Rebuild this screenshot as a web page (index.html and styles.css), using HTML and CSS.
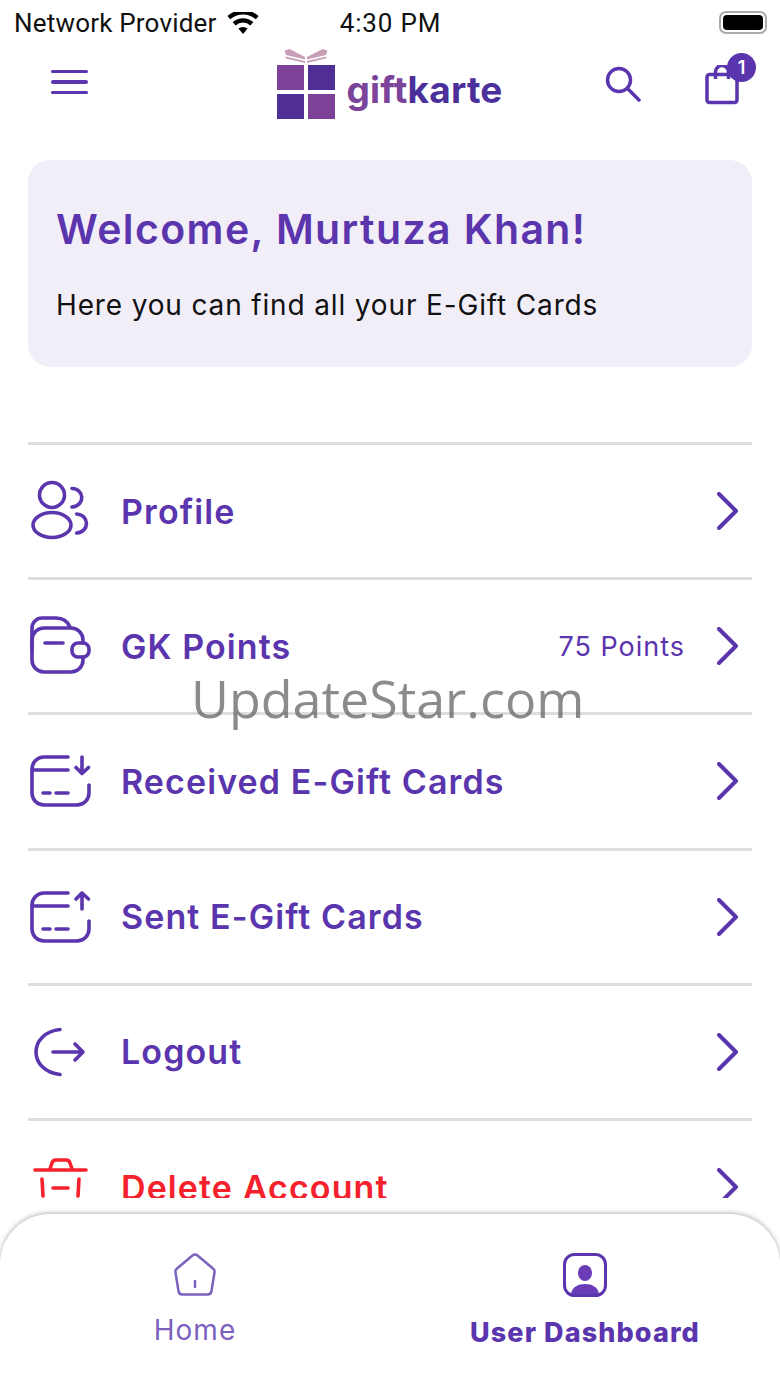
FILE: index.html
```html
<!DOCTYPE html>
<html lang="en">
<head>
  <meta charset="UTF-8">
  <meta name="viewport" content="width=device-width, initial-scale=1">
  <title>Giftkarte Dashboard</title>
  <link rel="stylesheet" href="styles.css">
</head>
<body>

<!-- Status bar -->
<div class="status-bar">
  <div class="status-left">
    <span>Network Provider</span>
    <svg class="wifi" viewBox="0 0 32 22"><path d="M16 22l-4.6-5.4a7 7 0 0 1 9.2 0z"/><path d="M8.6 13.4l-2.9-3.3a15.6 15.6 0 0 1 20.6 0l-2.9 3.3a11.2 11.2 0 0 0-14.8 0z"/><path d="M3.2 7.2L.4 4a23.6 23.6 0 0 1 31.2 0l-2.8 3.2a19.4 19.4 0 0 0-25.6 0z"/></svg>
  </div>
  <div class="status-time">4:30 PM</div>
  <div class="status-right">
    <div class="battery"><div class="battery-fill"></div></div>
  </div>
</div>

<!-- Header -->
<header>
  <div class="menu-btn"><span></span><span></span><span></span></div>
  <div class="logo">
    <svg class="logo-box" viewBox="0 0 58 71">
      <path class="ribbon" d="M7.500 1.500L12.500 0 28 8v2.500L9 6zM50.500 1.500L45.500 0 30 8v2.500L49 6z"/>
      <path class="ribbon" d="M8.500 7.500L28 12v2L9 9.500zM49.500 7.500L30 12v2l19-4.500z"/>
      <rect class="box-a" x="0" y="16" width="27" height="25"/>
      <rect class="box-b" x="31" y="16" width="27" height="25"/>
      <rect class="box-b" x="0" y="45" width="27" height="25"/>
      <rect class="box-a" x="31" y="45" width="27" height="25"/>
    </svg>
    <span class="logo-text"><span class="logo-gift">gift</span>karte</span>
  </div>
  <div class="header-right">
    <svg class="search" viewBox="0 0 36 36"><circle cx="14" cy="14" r="11.5"/><path d="M22.5 22.5L34 34"/></svg>
    <div class="cart">
      <svg class="bag" viewBox="0 0 34 40"><rect x="2" y="9.500" width="30" height="28" rx="2.500"/><path d="M10.500 14V7a6.500 6.500 0 0 1 13 0v7"/></svg>
      <span class="badge">1</span>
    </div>
  </div>
</header>

<main>
  <section class="welcome">
    <h1>Welcome, Murtuza Khan!</h1>
    <p>Here you can find all your E-Gift Cards</p>
  </section>

  <ul class="menu">
    <li>
      <svg class="icon" viewBox="0 0 64 64"><circle cx="24" cy="16" r="12.5"/><ellipse cx="24" cy="46" rx="19" ry="12.5"/><path d="M44 9.500c12 0 14 17 0 18.500"/><path d="M48.700 35c13 1 13 18 0 19"/></svg>
      <span class="label">Profile</span>
      <svg class="chevron" viewBox="0 0 22 38"><path d="M2 2l17 17L2 36"/></svg>
    </li>
    <li>
      <svg class="icon" viewBox="0 0 64 64"><path d="M4 36V14a10 10 0 0 1 10-10h14c6 0 11 2 14 9"/><path d="M55 29v-3a12 12 0 0 0-12-12H16A12 12 0 0 0 4 26v20a12 12 0 0 0 12 12h27a12 12 0 0 0 12-12v-3"/><rect x="44" y="29" width="17" height="14" rx="6"/><path d="M17 29h18"/></svg>
      <span class="label">GK Points</span>
      <span class="points">75 Points</span>
      <svg class="chevron" viewBox="0 0 22 38"><path d="M2 2l17 17L2 36"/></svg>
    </li>
    <li>
      <svg class="icon" viewBox="0 0 64 64"><path d="M40 8H16A12 12 0 0 0 4 20v24a12 12 0 0 0 12 12h33a12 12 0 0 0 12-12v-8"/><path d="M4 21h36"/><path d="M15 44h7M28 44h12"/><path d="M54 8v16M48 18.500l6 6 6.500-6"/></svg>
      <span class="label">Received E-Gift Cards</span>
      <svg class="chevron" viewBox="0 0 22 38"><path d="M2 2l17 17L2 36"/></svg>
    </li>
    <li>
      <svg class="icon" viewBox="0 0 64 64"><path d="M40 8H16A12 12 0 0 0 4 20v24a12 12 0 0 0 12 12h33a12 12 0 0 0 12-12v-8"/><path d="M4 21h36"/><path d="M15 44h7M28 44h12"/><path d="M54 8v16M48 14l6-6 6.500 6"/></svg>
      <span class="label">Sent E-Gift Cards</span>
      <svg class="chevron" viewBox="0 0 22 38"><path d="M2 2l17 17L2 36"/></svg>
    </li>
    <li>
      <svg class="icon" viewBox="0 0 64 64"><path d="M32 9.500C17 11 8 21 8 32s9 21 24 22.500"/><path d="M25 32h30M47 24l8 8-8 8"/></svg>
      <span class="label">Logout</span>
      <svg class="chevron" viewBox="0 0 22 38"><path d="M2 2l17 17L2 36"/></svg>
    </li>
    <li class="danger">
      <svg class="icon" viewBox="0 0 64 64"><path d="M7 15h51"/><path d="M22 14l2-6c.5-2 2-3 4-3h10c2 0 3.500 1 4 3l2 6"/><path d="M14 24l1 17M51 24l-1 17"/><path d="M25 33h15"/></svg>
      <span class="label">Delete Account</span>
      <svg class="chevron" viewBox="0 0 22 38"><path d="M2 2l17 17L2 36"/></svg>
    </li>
  </ul>
</main>

<!-- Bottom nav -->
<nav class="tabs">
  <div class="tab">
    <svg class="tab-icon home" viewBox="0 0 44 44"><path d="M19.500 2.500a4 4 0 0 1 5 0l15.500 13a4 4 0 0 1 1.500 4l-3 18.500a4 4 0 0 1-4 3.500H9.500a4 4 0 0 1-4-3.500l-3-18.500a4 4 0 0 1 1.500-4z"/><path d="M22 28v6"/></svg>
    <span>Home</span>
  </div>
  <div class="tab active">
    <svg class="tab-icon user" viewBox="0 0 44 44"><rect x="1.500" y="1.500" width="41" height="41" rx="10"/><ellipse class="fill" cx="22" cy="20" rx="7" ry="8"/><path class="fill" d="M8 41c1-7 7-10 14-10s13 3 14 10z"/></svg>
    <span>User Dashboard</span>
  </div>
</nav>

<div class="watermark">UpdateStar.com</div>

</body>
</html>
```

FILE: styles.css
```css
* { box-sizing: border-box; }
body { margin: 0; width: 780px; height: 1387px; overflow: hidden; position: relative; display: flex; flex-direction: column; background: #fff; font-family: Inter, "Liberation Sans", sans-serif; color: #5a35ad; }

.status-bar { height: 45px; flex: none; display: grid; grid-template-columns: 1fr auto 1fr; align-items: center; padding: 0 13px 0 14px; color: #111; font-size: 26px; font-family: Roboto, "Liberation Sans", sans-serif; }
.status-left { display: flex; align-items: center; gap: 10px; letter-spacing: .2px; }
.status-time { letter-spacing: .8px; }
.wifi { width: 32px; height: 22px; fill: #000; }
.status-right { display: flex; justify-content: flex-end; }
.battery { width: 48px; height: 23px; border: 2px solid #aaa; border-radius: 7px; padding: 2px; }
.battery-fill { height: 100%; background: #000; border-radius: 4px; }

header { height: 85px; flex: none; display: grid; grid-template-columns: 1fr auto 1fr; align-items: center; padding: 0 24px; }
.menu-btn { width: 37px; margin-left: 27px; display: flex; flex-direction: column; gap: 7px; margin-top: -11px; }
.menu-btn span { height: 3.500px; background: #5a35ad; border-radius: 2px; }
.logo { display: flex; align-items: flex-end; gap: 11px; margin-top: -7px; }
.logo-box { width: 58px; height: 71px; display: block; }
.ribbon { fill: #c7a0b8; }
.box-a { fill: #7d4298; }
.box-b { fill: #4f2f96; }
.logo-text { font-size: 37px; font-weight: 700; line-height: 44px; margin-bottom: 8px; color: #4b2f9b; letter-spacing: .2px; }
.logo-gift { color: #7b4399; }
.header-right { display: flex; justify-content: flex-end; align-items: center; gap: 64px; margin-top: -7px; }
.search { width: 36px; height: 36px; fill: none; stroke: #5a35ad; stroke-width: 3.5; stroke-linecap: round; }
.cart { position: relative; width: 51px; height: 44px; }
.bag { width: 34px; height: 40px; margin-top: 3px; display: block; fill: none; stroke: #5a35ad; stroke-width: 3.5; stroke-linejoin: round; }
.badge { position: absolute; right: 0; top: -9px; width: 29px; height: 29px; border-radius: 50%; background: #5a35ad; color: #fff; font-size: 18px; font-weight: 600; line-height: 29px; text-align: center; }

main { flex: 1; margin-bottom: 16px; padding: 30px 28px 0; overflow: hidden; }
.welcome { height: 207px; background: #f2eef8; border-radius: 22px; padding: 43px 28px 0; }
.welcome h1 { margin: 0; font-size: 41px; font-weight: 600; line-height: 52px; letter-spacing: 1.4px; }
.welcome p { margin: 32px 0 0; font-size: 28px; line-height: 36px; color: #111; letter-spacing: .85px; }

.menu { list-style: none; margin: 75px 0 0; padding: 0; }
.menu li { height: 135.200px; border-top: 3px solid #ddd; display: flex; align-items: center; }
.icon { width: 64px; height: 64px; flex: none; fill: none; stroke: #5a35ad; stroke-width: 3.600; stroke-linecap: round; stroke-linejoin: round; }
.label { margin-left: 29px; flex: 1; font-size: 34px; font-weight: 600; letter-spacing: 1.100px; }
.points { font-size: 27px; margin-right: 32px; letter-spacing: 1px; }
.chevron { width: 22px; height: 38px; flex: none; margin-right: 13px; fill: none; stroke: #5a35ad; stroke-width: 4; stroke-linecap: round; stroke-linejoin: round; }
.danger .icon { stroke: #f5222d; }
.danger .label { color: #f5222d; }

.tabs { height: 173px; flex: none; display: grid; grid-template-columns: 1fr 1fr; border-radius: 50px 50px 0 0; background: #fff; box-shadow: 0 -1px 5px rgba(0,0,0,.3); }
.tab { display: flex; flex-direction: column; align-items: center; padding-top: 39px; font-size: 28px; color: #7b62bd; gap: 16px; letter-spacing: 1px; }
.tab.active { color: #5a35ad; font-weight: 800; font-size: 27px; letter-spacing: 1.1px; gap: 19px; }
.tab-icon { width: 44px; height: 44px; fill: none; stroke-linecap: round; stroke-linejoin: round; }
.home { stroke: #7b62bd; stroke-width: 2.500; }
.user { stroke: #5a35ad; stroke-width: 3; }
.user .fill { fill: #6a3cb8; stroke: none; }

.watermark { position: absolute; left: 191px; top: 660px; font-family: "Open Sans", sans-serif; font-weight: 400; font-size: 52px; line-height: 75px; color: rgba(100,100,100,.75); }
```
